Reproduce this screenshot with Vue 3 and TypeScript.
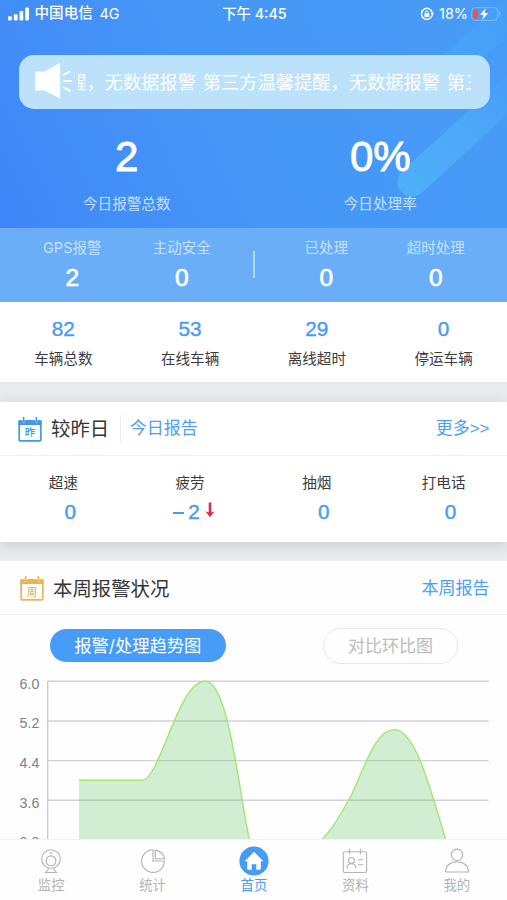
<script setup lang="ts">
interface Stat {
  label: string
  value: string
}

interface Change extends Stat {
  trend?: 'down'
}

const headline: Stat[] = [
  { label: '今日报警总数', value: '2' },
  { label: '今日处理率', value: '0%' },
]
const bandLeft: Stat[] = [
  { label: 'GPS报警', value: '2' },
  { label: '主动安全', value: '0' },
]
const bandRight: Stat[] = [
  { label: '已处理', value: '0' },
  { label: '超时处理', value: '0' },
]
const vehicles: Stat[] = [
  { label: '车辆总数', value: '82' },
  { label: '在线车辆', value: '53' },
  { label: '离线超时', value: '29' },
  { label: '停运车辆', value: '0' },
]
const changes: Change[] = [
  { label: '超速', value: '0' },
  { label: '疲劳', value: '2', trend: 'down' },
  { label: '抽烟', value: '0' },
  { label: '打电话', value: '0' },
]
const ticks = ['6.0', '5.2', '4.4', '3.6', '2.8'].map((label, i) => ({
  label,
  y: 11.3 + i * 39.65,
}))

const curveA = 'M79 110.2H142C160 110.2 178 11.3 205 11.3C231 11.3 240 141 254 190'
const curveB = 'M314 178C336 156 338 148 351 126C365 96 376 59.6 394 59.6C416 59.6 430 118 450 184'
</script>

<template>
  <div class="screen">
    <main class="content">
      <section class="hero">
        <svg class="rays" width="507" height="228" viewBox="0 0 507 228">
          <defs>
            <linearGradient id="ray" gradientUnits="userSpaceOnUse" x1="400" y1="190" x2="507" y2="90">
              <stop offset="0" stop-color="#50b4fa" stop-opacity=".85" />
              <stop offset=".6" stop-color="#50b4fa" stop-opacity=".55" />
              <stop offset="1" stop-color="#50b4fa" stop-opacity=".12" />
            </linearGradient>
            <linearGradient id="ray2" gradientUnits="userSpaceOnUse" x1="450" y1="65" x2="515" y2="5">
              <stop offset="0" stop-color="#46acf9" stop-opacity=".65" />
              <stop offset="1" stop-color="#46acf9" stop-opacity=".05" />
            </linearGradient>
          </defs>
          <path d="M412 182L530 74" stroke="url(#ray)" stroke-width="29" stroke-linecap="round" />
          <path d="M445 73L530 -3" stroke="url(#ray2)" stroke-width="29" stroke-linecap="round" />
        </svg>

        <header class="status">
          <div class="status-side">
            <svg width="22" height="14" viewBox="0 0 22 14" fill="#fff">
              <rect x="0" y="9.3" width="3.8" height="4.2" rx="1.1" />
              <rect x="5.8" y="7.2" width="3.8" height="6.3" rx="1.1" />
              <rect x="11.5" y="4" width="3.8" height="9.5" rx="1.1" />
              <rect x="17.2" y="0.4" width="3.8" height="13.1" rx="1.1" />
            </svg>
            <span class="carrier">中国电信</span>
            <span class="network">4G</span>
          </div>
          <div class="clock">下午 4:45</div>
          <div class="status-side end">
            <svg class="lock" width="14" height="14" viewBox="0 0 14 14" fill="none" stroke="#fff">
              <path d="M12.2 8.6A5.5 5.5 0 1 1 12.4 5.8" stroke-width="1.4" />
              <path d="M10.7 6.1h3.3l-1.6 2.8z" fill="#fff" stroke="none" />
              <rect x="4.4" y="6.3" width="5" height="3.6" rx=".6" fill="#fff" stroke="none" />
              <path d="M5.4 6.5V5.4a1.5 1.5 0 0 1 3 0V6.5" stroke-width="1" />
            </svg>
            <span class="percent">18%</span>
            <svg width="30" height="14" viewBox="0 0 30 14">
              <rect x=".6" y=".6" width="26" height="12.8" rx="3.6" fill="none" stroke="#8fc4fb" stroke-opacity=".75" />
              <path d="M28 4.8c1.5.5 1.5 3.9 0 4.4z" fill="#8fc4fb" />
              <path d="M2.3 4.2q0-2 2-2H7v9.6H4.3q-2 0-2-2z" fill="#ec5545" />
              <path d="M14.9 1L9 7.7h3.5L11.2 13l6-6.9h-3.6z" fill="#fff" />
            </svg>
          </div>
        </header>

        <div class="notice">
          <svg class="horn" width="38" height="38" viewBox="0 0 38 38" fill="#fff">
            <path d="M1 9.5H9.5L25.2.7V36.8L9.5 28.5H1Q.3 28.500.3 27.5V10.5Q.3 9.500 1 9.5z" />
            <path d="M28.8 12.700L34.600 9.700M29.200 19H36M28.800 25.700L34.600 28.700" stroke="#fff" stroke-width="2" stroke-linecap="round" />
          </svg>
          <div class="marquee">
            <span class="marquee-text">醒，无数据报警 第三方温馨提醒，无数据报警 第三方温馨提醒</span>
          </div>
        </div>

        <div class="headline">
          <div v-for="item in headline" :key="item.label" class="headline-item">
            <strong>{{ item.value }}</strong>
            <span>{{ item.label }}</span>
          </div>
        </div>
      </section>

      <section class="band">
        <div v-for="item in bandLeft" :key="item.label" class="band-item">
          <span>{{ item.label }}</span>
          <strong>{{ item.value }}</strong>
        </div>
        <i class="band-rule"></i>
        <div v-for="item in bandRight" :key="item.label" class="band-item">
          <span>{{ item.label }}</span>
          <strong>{{ item.value }}</strong>
        </div>
      </section>

      <section class="vehicles">
        <div v-for="item in vehicles" :key="item.label" class="vehicle">
          <strong>{{ item.value }}</strong>
          <span>{{ item.label }}</span>
        </div>
      </section>

      <section class="card compare">
        <div class="card-head">
          <svg class="calendar blue" width="24" height="25" viewBox="0 0 24 25">
            <path d="M1.2 4.5H22.8V22.8Q22.8 23.8 21.8 23.8H2.2Q1.2 23.8 1.2 22.8Z" fill="none" stroke="currentColor" stroke-width="1.7" />
            <path d="M.4 4Q.4 3 1.4 3H3.8V4.5Q5.6 7 7.4 4.5V3H16.6V4.5Q18.4 7 20.2 4.5V3H22.6Q23.600 3 23.6 4V8H.4Z" fill="currentColor" />
            <path d="M5.6 .8V4.3M18.4 .8V4.3" stroke="currentColor" stroke-width="1.7" stroke-linecap="round" />
            <text x="12" y="19.4" text-anchor="middle">昨</text>
          </svg>
          <h2>较昨日</h2>
          <i class="head-rule"></i>
          <a class="link">今日报告</a>
          <a class="link more">更多&gt;&gt;</a>
        </div>
        <div class="changes">
          <div v-for="item in changes" :key="item.label" class="change">
            <span>{{ item.label }}</span>
            <div class="change-value" :class="{ trending: item.trend }">
              <i v-if="item.trend" class="minus"></i>
              <strong>{{ item.value }}</strong>
              <svg v-if="item.trend" class="arrow" width="10" height="16" viewBox="0 0 10 16">
                <path d="M5 .5V13" stroke="#cf3048" stroke-width="2.6" />
                <path d="M.3 9.300Q3 10.500 5 10.500T9.700 9.300L5 15.300z" fill="#cf3048" />
              </svg>
            </div>
          </div>
        </div>
      </section>

      <section class="card weekly">
        <div class="card-head">
          <svg class="calendar amber" width="24" height="25" viewBox="0 0 24 25">
            <path d="M1.2 4.5H22.8V22.8Q22.8 23.8 21.8 23.8H2.2Q1.2 23.8 1.2 22.8Z" fill="none" stroke="currentColor" stroke-width="1.7" />
            <path d="M.4 4Q.4 3 1.4 3H3.8V4.5Q5.6 7 7.4 4.5V3H16.6V4.5Q18.4 7 20.2 4.5V3H22.6Q23.600 3 23.6 4V8H.4Z" fill="currentColor" />
            <path d="M5.6 .8V4.3M18.4 .8V4.3" stroke="currentColor" stroke-width="1.7" stroke-linecap="round" />
            <text x="12" y="19.600" text-anchor="middle">周</text>
          </svg>
          <h2>本周报警状况</h2>
          <a class="link more">本周报告</a>
        </div>
        <div class="tabs">
          <button class="tab active">报警/处理趋势图</button>
          <button class="tab">对比环比图</button>
        </div>
        <svg class="chart" width="507" height="190" viewBox="0 0 507 190">
          <g v-for="tick in ticks" :key="tick.label">
            <path :d="`M47.7 ${tick.y}H488.7`" stroke="#d2d2d4" stroke-width="1.4" />
            <text x="39.3" :y="tick.y + 7.3" text-anchor="end">{{ tick.label }}</text>
          </g>
          <path d="M47.7 11.3V190" stroke="#c9c9cb" stroke-width="1.3" />
          <path :d="`${curveA}H79Z`" fill="#64c96a" fill-opacity=".29" />
          <path :d="`${curveB}H314Z`" fill="#64c96a" fill-opacity=".29" />
          <path :d="curveA" fill="none" stroke="#a2e66e" stroke-width="1.4" />
          <path :d="curveB" fill="none" stroke="#a2e66e" stroke-width="1.4" />
        </svg>
      </section>
    </main>

    <nav class="tabbar">
      <a class="nav-item">
        <svg width="30" height="30" viewBox="0 0 30 30" fill="none" stroke="currentColor" stroke-width="1.1">
          <circle cx="15" cy="13" r="9.3" />
          <circle cx="15" cy="14.8" r="4.9" />
          <circle cx="15" cy="7" r="1" fill="currentColor" stroke="none" />
          <path d="M12.2 21.9V23.5L9.5 26.5H20.5L17.8 23.5V21.9" />
        </svg>
        <span>监控</span>
      </a>
      <a class="nav-item">
        <svg width="30" height="30" viewBox="0 0 30 30" fill="none" stroke="currentColor" stroke-width="1.1">
          <path d="M15 3.8A11.3 11.3 0 1 0 26.3 15H15Z" />
          <path d="M17.3 4.1V12.7H26.500A11 11 0 0 0 17.3 4.1Z" />
        </svg>
        <span>统计</span>
      </a>
      <a class="nav-item active">
        <svg width="30" height="30" viewBox="0 0 30 30">
          <circle cx="15" cy="15" r="14.6" fill="#469bf5" />
          <path d="M15 5.8L24.3 15.2H21.8V22.5Q21.8 23.8 20.5 23.8H17.3V18.3H12.7V23.8H9.5Q8.2 23.8 8.2 22.5V15.2H5.7Z" fill="#fff" />
        </svg>
        <span>首页</span>
      </a>
      <a class="nav-item">
        <svg width="30" height="30" viewBox="0 0 30 30" fill="none" stroke="currentColor" stroke-width="1.1">
          <rect x="3.3" y="5.7" width="23.3" height="20.8" rx="1.6" />
          <path d="M9.5 2.8V8.3M20.4 2.8V8.3M17.8 13.8H23M17.8 18.8H23" />
          <circle cx="11.5" cy="14.5" r="3" />
          <path d="M7 22.2Q7.3 17.7 11.5 17.7T16 22.2" />
        </svg>
        <span>资料</span>
      </a>
      <a class="nav-item">
        <svg width="30" height="30" viewBox="0 0 30 30" fill="none" stroke="currentColor" stroke-width="1.1">
          <circle cx="15" cy="8.8" r="5.7" />
          <path d="M3.5 26C3.5 19.5 8.5 15.9 15 15.9S26.5 19.5 26.5 26Z" />
        </svg>
        <span>我的</span>
      </a>
    </nav>
  </div>
</template>

<style>
body {
  margin: 0;
}
</style>

<style scoped>
.screen {
  display: flex;
  flex-direction: column;
  width: 507px;
  height: 900px;
  overflow: hidden;
  background: #e8ecee;
  font-family: Inter, "Noto Sans CJK SC", sans-serif;
  color: #3c3c3e;
}
svg {
  display: block;
  flex: none;
}
strong {
  font-family: "Liberation Sans", Arial, sans-serif;
  font-weight: 400;
}
.content {
  flex: 1;
  min-height: 0;
  overflow: hidden;
}
.hero {
  position: relative;
  height: 228px;
  background: linear-gradient(65deg, #3f86f8 0%, #4596f7 42%, #489cf6 100%);
  color: #fff;
}
.rays {
  position: absolute;
  inset: 0;
}
.status {
  position: relative;
  display: grid;
  grid-template-columns: 1fr auto 1fr;
  align-items: center;
  height: 27px;
  padding: 0 6px 0 8px;
  font-size: 14.6px;
  line-height: 27px;
  font-weight: 500;
}
.status-side {
  display: flex;
  align-items: center;
}
.carrier {
  margin-left: 4.5px;
}
.network {
  margin-left: 6.5px;
  font-size: 14.4px;
  font-weight: 400;
}
.clock {
  font-size: 14.3px;
}
.end {
  justify-content: flex-end;
}
.percent {
  margin: 0 3px 0 5.5px;
  font-size: 14.4px;
  font-weight: 400;
}
.notice {
  position: relative;
  display: flex;
  align-items: center;
  box-sizing: border-box;
  height: 54px;
  margin: 27.5px 17.5px 0 19px;
  padding: 0 18.5px 0 16px;
  border-radius: 15px;
  background: #bce1fb;
}
.horn {
  margin-top: -1px;
}
.marquee {
  flex: 1;
  margin-left: 5px;
  overflow: hidden;
  white-space: nowrap;
  font-size: 18.25px;
  line-height: 30px;
}
.marquee-text {
  display: inline-block;
  margin-left: -9.7px;
  word-spacing: 1.6px;
}
.headline {
  position: relative;
  display: grid;
  grid-template-columns: 1fr 1fr;
  margin-top: 24px;
}
.headline-item {
  display: flex;
  flex-direction: column;
  align-items: center;
}
.headline-item strong {
  font-size: 42px;
  line-height: 48px;
  -webkit-text-stroke: 0.9px #fff;
}
.headline-item span {
  margin-top: 12px;
  font-size: 14.6px;
  line-height: 22px;
  color: #c6e0fd;
}
.band {
  display: grid;
  grid-template-columns: 1fr 1fr 35px 1fr 1fr;
  align-items: center;
  justify-items: center;
  height: 73.5px;
  padding: 0 16.5px 0 17.5px;
  background: #6aaef8;
}
.band-item {
  display: flex;
  flex-direction: column;
  align-items: center;
}
.band-item span {
  font-size: 14.5px;
  line-height: 22px;
  color: #c6e1fd;
}
.band-item strong {
  margin-top: 4px;
  font-size: 24.5px;
  line-height: 30px;
  color: #fff;
  -webkit-text-stroke: 0.7px #fff;
}
.band-rule {
  width: 1.5px;
  height: 27px;
  background: #b4d7fc;
}
.vehicles {
  display: grid;
  grid-template-columns: repeat(4, 1fr);
  height: 80.5px;
  background: #fff;
}
.vehicle {
  display: flex;
  flex-direction: column;
  align-items: center;
  padding-top: 15px;
}
.vehicle strong {
  font-size: 20.7px;
  line-height: 24px;
  color: #4a9bf3;
  -webkit-text-stroke: 0.4px #4a9bf3;
}
.vehicle span {
  margin-top: 7px;
  font-size: 14.6px;
  line-height: 22px;
}
.card {
  background: #fff;
}
.compare {
  height: 140px;
  margin: 19.5px 0;
  box-shadow: 0 3px 13px rgba(90, 105, 110, 0.24);
}
.card-head {
  display: flex;
  align-items: center;
  box-sizing: border-box;
  height: 54px;
  padding: 2px 17.5px 0 18px;
  border-bottom: 1px solid #f0f0f1;
}
.calendar text {
  font-family: "Noto Sans CJK SC", sans-serif;
  font-size: 10.5px;
  font-weight: 500;
  fill: currentColor;
}
.blue {
  color: #4497ed;
}
.amber {
  color: #eab54e;
  margin-left: 2px;
}
h2 {
  margin: 0 0 0 9px;
  font-size: 19.4px;
  font-weight: 400;
  line-height: 28px;
  color: #353537;
}
.head-rule {
  width: 1px;
  height: 28px;
  margin: 0 9px 0 10.5px;
  background: #ececee;
}
.link {
  font-family: "Liberation Sans", "Noto Sans CJK SC", sans-serif;
  font-size: 17px;
  line-height: 26px;
  color: #4d9ff3;
}
.more {
  margin-left: auto;
}
.changes {
  display: grid;
  grid-template-columns: repeat(4, 1fr);
}
.change {
  display: flex;
  flex-direction: column;
  align-items: center;
  padding-top: 16.5px;
}
.change > span {
  font-size: 14.6px;
  line-height: 22px;
}
.change-value {
  display: flex;
  align-items: center;
  margin-top: 6px;
  padding-left: 14px;
}
.change-value strong {
  font-size: 20.7px;
  line-height: 24px;
  color: #4a9bf3;
  -webkit-text-stroke: 0.4px #4a9bf3;
}
.change-value.trending {
  padding-left: 8px;
}
.minus {
  width: 10.5px;
  height: 2px;
  margin: 2px 4.5px 0 0;
  background: #4a9bf3;
}
.arrow {
  margin: -4px 0 0 5px;
}
.weekly {
  height: 300px;
  background: #fefefe;
}
.tabs {
  display: flex;
  justify-content: space-between;
  align-items: center;
  height: 36px;
  margin: 12.5px 49px 0 50px;
}
.tab {
  box-sizing: border-box;
  width: 135px;
  height: 36px;
  padding: 0;
  border: 1.5px solid #e9e9ea;
  border-radius: 18px;
  background: transparent;
  font: inherit;
  font-size: 17px;
  line-height: 30px;
  color: #bcbcbe;
}
.tab.active {
  width: 175.5px;
  height: 33px;
  border: 0;
  background: #469cf6;
  font-size: 17.3px;
  color: #fff;
}
.chart {
  margin-top: 6.5px;
}
.chart text {
  font-family: "Liberation Sans", Arial, sans-serif;
  font-size: 14.2px;
  fill: #818184;
}
.tabbar {
  display: grid;
  grid-template-columns: repeat(5, 1fr);
  box-sizing: border-box;
  height: 61px;
  border-top: 1px solid #f1f1f2;
  background: #fefefe;
}
.nav-item {
  display: flex;
  flex-direction: column;
  align-items: center;
  padding: 6px 0 0 1px;
  color: #b3b3b5;
}
.nav-item span {
  font-size: 13.4px;
  line-height: 18px;
}
.nav-item.active {
  color: #4a9df5;
}
</style>
